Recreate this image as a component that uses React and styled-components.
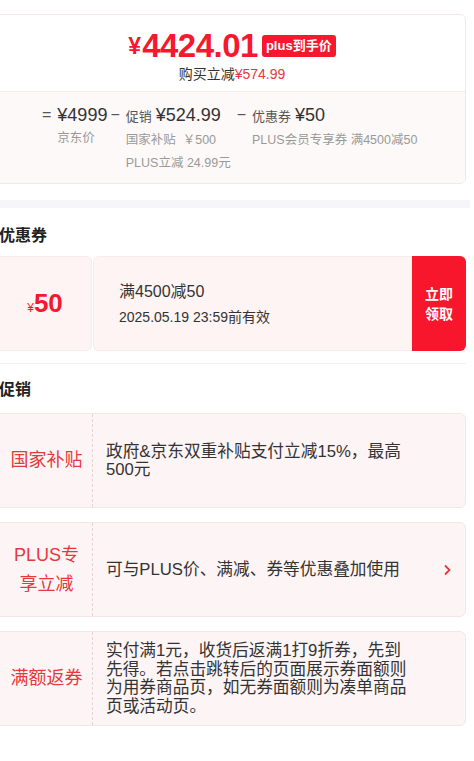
import React from "react";
import styled, { createGlobalStyle } from "styled-components";

const GlobalStyle = createGlobalStyle`
  body {
    margin: 0;
    background: #fff;
    font-family: "Liberation Sans", "Noto Sans CJK SC", sans-serif;
    color: #333;
  }
`;

const Page = styled.div`
  width: 474px;
  margin-left: -8px;
  padding: 14px 0 30px;
  box-sizing: border-box;
`;

const PriceCard = styled.div`
  border: 1px solid #f0e8e8;
  border-radius: 6px;
  overflow: hidden;
`;

const PriceTop = styled.div`
  display: flex;
  flex-direction: column;
  align-items: center;
  padding: 12px 0 8px 6px;
  border-bottom: 1px solid #f3ecec;
  background: #fff;
`;

const PriceLine = styled.div`
  display: flex;
  align-items: center;
  color: #f5182e;
  font-weight: bold;
  height: 38px;
`;

const Yen = styled.span`
  font-size: 23px;
  margin-right: 1px;
`;

const BigNum = styled.span`
  font-size: 33px;
  letter-spacing: -0.5px;
`;

const Badge = styled.span`
  background: #f5182e;
  color: #fff;
  font-size: 13px;
  font-weight: bold;
  padding: 3px 4px;
  border-radius: 3px;
  margin-left: 4px;
  line-height: 16px;
`;

const Sub = styled.div`
  font-size: 14px;
  line-height: 18px;
  color: #333;
  span {
    color: #e4393c;
  }
`;

const Breakdown = styled.div`
  background: #fdf9f8;
  display: flex;
  padding: 11px 0 8px 49px;
`;

const Col = styled.div`
  display: grid;
  grid-template-columns: auto auto;
  column-gap: 6px;
  align-content: start;
  margin-right: ${(p) => p.$gap || 0}px;
`;

const Sign = styled.span`
  font-size: 16px;
  color: #555;
  line-height: 24px;
`;

const Main = styled.div`
  display: flex;
  align-items: baseline;
  gap: 4px;
  line-height: 24px;
`;

const Label = styled.span`
  font-size: 13px;
  color: #555;
`;

const Amount = styled.span`
  font-size: 18px;
  color: #333;
`;

const Note = styled.div`
  grid-column: 2;
  font-size: 12.5px;
  color: #999;
  line-height: 23px;
  white-space: nowrap;
`;

const Band = styled.div`
  height: 8px;
  background: #f5f5fa;
  margin: 16px -4px 0 0;
`;

const Heading = styled.div`
  font-size: 16px;
  font-weight: bold;
  color: #222;
  padding: ${(p) => p.$pt}px 0 0 7px;
  line-height: 22px;
  margin-bottom: ${(p) => p.$mb}px;
`;

const CouponRow = styled.div`
  display: flex;
  height: 95px;
  gap: 1px;
`;

const CouponValue = styled.div`
  width: 100px;
  flex-shrink: 0;
  background: #fdf4f3;
  border: 1px solid #f8ecea;
  border-radius: 6px;
  box-sizing: border-box;
  display: flex;
  align-items: center;
  justify-content: center;
  color: #f5182e;
  padding-left: 6px;
`;

const SmallYen = styled.span`
  font-size: 12px;
  margin-top: 8px;
`;

const CouponNum = styled.span`
  font-size: 26px;
  font-weight: bold;
`;

const CouponInfo = styled.div`
  flex: 1;
  background: #fdf4f3;
  border: 1px solid #f8ecea;
  border-right: none;
  border-radius: 6px 0 0 6px;
  display: flex;
  flex-direction: column;
  justify-content: center;
  padding-left: 25px;
  gap: 4px;
`;

const CouponTitle = styled.div`
  font-size: 16px;
  color: #333;
  line-height: 22px;
`;

const CouponDate = styled.div`
  font-size: 14px;
  color: #333;
  line-height: 20px;
`;

const TakeButton = styled.button`
  width: 54px;
  flex-shrink: 0;
  border: none;
  background: #f7162c;
  color: #fff;
  font-family: inherit;
  font-size: 14px;
  font-weight: bold;
  line-height: 20px;
  border-radius: 0 6px 6px 0;
  padding: 0;
  margin-left: -1px;
`;

const Divider = styled.div`
  height: 1px;
  background: #f2f2f2;
  margin-top: 12px;
`;

const PromoList = styled.div`
  display: flex;
  flex-direction: column;
  gap: 14px;
`;

const PromoCard = styled.div`
  display: flex;
  height: 95px;
  background: #fdf5f5;
  border: 1px solid #f3e6e6;
  border-radius: 6px;
  box-sizing: border-box;
`;

const PromoTag = styled.div`
  width: 100px;
  flex-shrink: 0;
  border-right: 1px dashed #e6d4d4;
  box-sizing: border-box;
  display: flex;
  align-items: center;
  justify-content: center;
  text-align: center;
  padding-left: 8px;
  color: #e4393c;
  font-size: 18px;
  line-height: 29px;
  white-space: pre-line;
`;

const PromoText = styled.div`
  flex: 1;
  display: flex;
  align-items: center;
  padding: 1px 13px 0 13px;
  font-size: 16.7px;
  line-height: 18.5px;
  color: #333;
`;

const TextBox = styled.div`
  width: 304px;
`;

const Chevron = styled.div`
  margin-left: auto;
  display: flex;
  align-items: center;
`;

const promos = [
  { tag: "国家补贴", text: "政府&京东双重补贴支付立减15%，最高500元" },
  { tag: "PLUS专\n享立减", text: "可与PLUS价、满减、券等优惠叠加使用", arrow: true },
  {
    tag: "满额返券",
    text: "实付满1元，收货后返满1打9折券，先到先得。若点击跳转后的页面展示券面额则为用券商品页，如无券面额则为凑单商品页或活动页。",
  },
];

export default function App() {
  return (
    <Page>
      <GlobalStyle />
      <PriceCard>
        <PriceTop>
          <PriceLine>
            <Yen>¥</Yen>
            <BigNum>4424.01</BigNum>
            <Badge>plus到手价</Badge>
          </PriceLine>
          <Sub>
            购买立减<span>¥574.99</span>
          </Sub>
        </PriceTop>
        <Breakdown>
          <Col $gap={3}>
            <Sign>=</Sign>
            <Main>
              <Amount>¥4999</Amount>
            </Main>
            <Note>京东价</Note>
          </Col>
          <Col $gap={6}>
            <Sign>−</Sign>
            <Main>
              <Label>促销</Label>
              <Amount>¥524.99</Amount>
            </Main>
            <Note>国家补贴&nbsp;&nbsp;￥500</Note>
            <Note>PLUS立减 24.99元</Note>
          </Col>
          <Col>
            <Sign>−</Sign>
            <Main>
              <Label>优惠券</Label>
              <Amount>¥50</Amount>
            </Main>
            <Note>PLUS会员专享券 满4500减50</Note>
          </Col>
        </Breakdown>
      </PriceCard>
      <Band />
      <Heading $pt={17} $mb={9}>优惠券</Heading>
      <CouponRow>
        <CouponValue>
          <SmallYen>¥</SmallYen>
          <CouponNum>50</CouponNum>
        </CouponValue>
        <CouponInfo>
          <CouponTitle>满4500减50</CouponTitle>
          <CouponDate>2025.05.19 23:59前有效</CouponDate>
        </CouponInfo>
        <TakeButton>
          立即
          <br />
          领取
        </TakeButton>
      </CouponRow>
      <Divider />
      <Heading $pt={15} $mb={12}>促销</Heading>
      <PromoList>
        {promos.map((p) => (
          <PromoCard key={p.tag}>
            <PromoTag>{p.tag}</PromoTag>
            <PromoText>
              <TextBox>{p.text}</TextBox>
              {p.arrow && (
                <Chevron>
                  <svg width="10" height="14" viewBox="0 0 10 14">
                    <path d="M3 2.5 L7.5 7 L3 11.5" fill="none" stroke="#e4393c" strokeWidth="1.8" />
                  </svg>
                </Chevron>
              )}
            </PromoText>
          </PromoCard>
        ))}
      </PromoList>
    </Page>
  );
}
